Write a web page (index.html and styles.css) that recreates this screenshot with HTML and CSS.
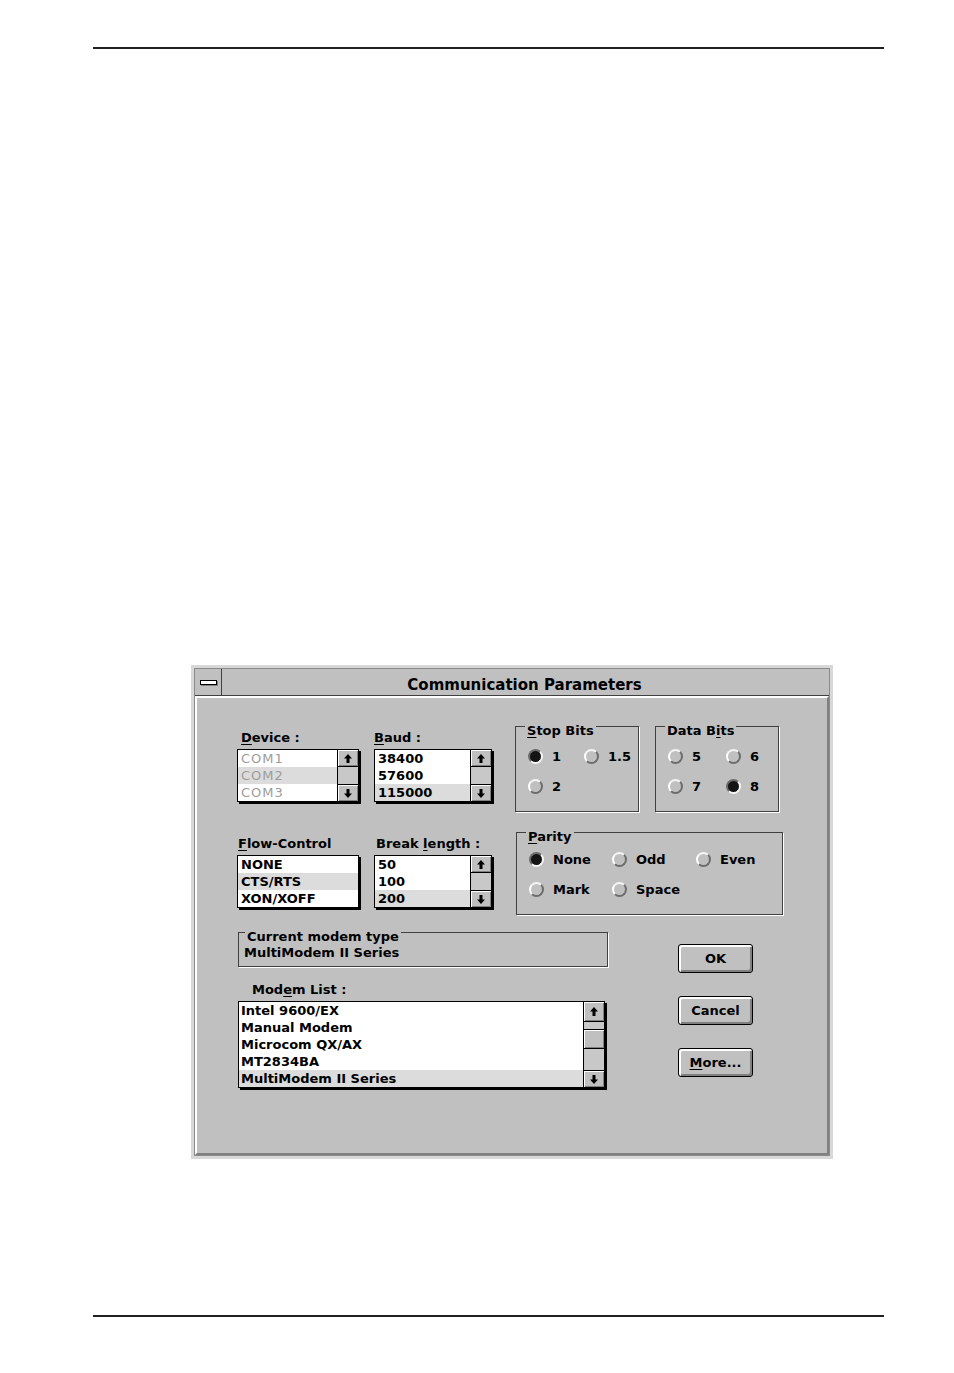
FILE: index.html
```html
<!DOCTYPE html>
<html>
<head>
<meta charset="utf-8">
<title>Communication Parameters</title>
<link rel="stylesheet" href="styles.css">
</head>
<body>
<div class="page">
  <div class="rule"></div>
  <div class="window">
    <div class="frame">
      <div class="titlebar">
        <div class="sysmenu"><span class="sysbar"></span></div>
        <div class="title">Communication Parameters</div>
      </div>
      <div class="client">
        <div class="row">
          <div class="field device">
            <div class="label pad4"><u>D</u>evice :</div>
            <div class="list small-list wide">
              <div class="items">
                <div class="item disabled">COM1</div>
                <div class="item disabled sel">COM2</div>
                <div class="item disabled">COM3</div>
              </div>
              <div class="sb">
                <div class="sb-btn sb-up"><svg width="8" height="9" viewBox="0 0 8 9"><path d="M4 0L8 4.5H5.5V9H2.5V4.5H0Z"/></svg></div>
                <div class="sb-track"></div>
                <div class="sb-btn sb-down"><svg width="8" height="9" viewBox="0 0 8 9"><path d="M4 9L8 4.5H5.5V0H2.5V4.5H0Z"/></svg></div>
              </div>
            </div>
          </div>
          <div class="field baud">
            <div class="label"><u>B</u>aud :</div>
            <div class="list small-list narrow">
              <div class="items">
                <div class="item">38400</div>
                <div class="item">57600</div>
                <div class="item sel">115000</div>
              </div>
              <div class="sb">
                <div class="sb-btn sb-up"><svg width="8" height="9" viewBox="0 0 8 9"><path d="M4 0L8 4.5H5.5V9H2.5V4.5H0Z"/></svg></div>
                <div class="sb-track"></div>
                <div class="sb-btn sb-down"><svg width="8" height="9" viewBox="0 0 8 9"><path d="M4 9L8 4.5H5.5V0H2.5V4.5H0Z"/></svg></div>
              </div>
            </div>
          </div>
          <div class="group stop">
            <div class="gtitle"><span><u>S</u>top Bits</span></div>
            <div class="opts">
              <div class="opt"><span class="radio on"></span>1</div>
              <div class="opt"><span class="radio"></span>1.5</div>
              <div class="opt"><span class="radio"></span>2</div>
            </div>
          </div>
          <div class="group data">
            <div class="gtitle"><span>Data B<u>i</u>ts</span></div>
            <div class="opts">
              <div class="opt"><span class="radio"></span>5</div>
              <div class="opt"><span class="radio"></span>6</div>
              <div class="opt"><span class="radio"></span>7</div>
              <div class="opt"><span class="radio on"></span>8</div>
            </div>
          </div>
        </div>

        <div class="row row2">
          <div class="field flow">
            <div class="label pad1"><u>F</u>low-Control</div>
            <div class="list small-list wide">
              <div class="items">
                <div class="item">NONE</div>
                <div class="item sel">CTS/RTS</div>
                <div class="item">XON/XOFF</div>
              </div>
            </div>
          </div>
          <div class="field baud">
            <div class="label pad2">Break <u>l</u>ength :</div>
            <div class="list small-list narrow">
              <div class="items">
                <div class="item">50</div>
                <div class="item">100</div>
                <div class="item sel">200</div>
              </div>
              <div class="sb">
                <div class="sb-btn sb-up"><svg width="8" height="9" viewBox="0 0 8 9"><path d="M4 0L8 4.5H5.5V9H2.5V4.5H0Z"/></svg></div>
                <div class="sb-track"></div>
                <div class="sb-btn sb-down"><svg width="8" height="9" viewBox="0 0 8 9"><path d="M4 9L8 4.5H5.5V0H2.5V4.5H0Z"/></svg></div>
              </div>
            </div>
          </div>
          <div class="group parity">
            <div class="gtitle"><span><u>P</u>arity</span></div>
            <div class="opts">
              <div class="opt"><span class="radio on"></span>None</div>
              <div class="opt"><span class="radio"></span>Odd</div>
              <div class="opt"><span class="radio"></span>Even</div>
              <div class="opt"><span class="radio"></span>Mark</div>
              <div class="opt"><span class="radio"></span>Space</div>
            </div>
          </div>
        </div>

        <div class="row row3">
          <div class="left">
            <div class="group current">
              <div class="gtitle"><span>Current modem type</span></div>
              <div class="value">MultiModem II Series</div>
            </div>
            <div class="label modem-label">Mod<u>e</u>m List :</div>
            <div class="list modem-list">
              <div class="items">
                <div class="item">Intel 9600/EX</div>
                <div class="item">Manual Modem</div>
                <div class="item">Microcom QX/AX</div>
                <div class="item">MT2834BA</div>
                <div class="item sel">MultiModem II Series</div>
              </div>
              <div class="sb">
                <div class="sb-btn sb-up tall"><svg width="8" height="9" viewBox="0 0 8 9"><path d="M4 0L8 4.5H5.5V9H2.5V4.5H0Z"/></svg></div>
                <div class="sb-track"><div class="thumb"></div></div>
                <div class="sb-btn sb-down"><svg width="8" height="9" viewBox="0 0 8 9"><path d="M4 9L8 4.5H5.5V0H2.5V4.5H0Z"/></svg></div>
              </div>
            </div>
          </div>
          <div class="buttons">
            <div class="btn">OK</div>
            <div class="btn">Cancel</div>
            <div class="btn"><span><u>M</u>ore...</span></div>
          </div>
        </div>
      </div>
    </div>
  </div>
  <div class="rule bottom"></div>
</div>
</body>
</html>
```

FILE: styles.css
```css
body {
  margin: 0;
  background: #fff;
  color: #000;
  font-family: "DejaVu Sans", "Liberation Sans", sans-serif;
  font-weight: bold;
  font-size: 13px;
}

.page {
  padding-top: 47px;
}

.rule {
  margin-left: 93px;
  width: 791px;
  height: 2px;
  background: #231f20;
}

.rule.bottom {
  margin-top: 156px;
}

u {
  text-decoration: underline;
  text-underline-offset: 2px;
  text-decoration-thickness: 1px;
}

/* window chrome */
.window {
  margin: 616px 0 0 191px;
  width: 642px;
  box-sizing: border-box;
  border: 3px solid #d8d8d8;
}

.frame {
  border: 1px solid #8a8a8a;
  background: #c0c0c0;
}

.titlebar {
  display: flex;
  height: 26px;
  border-bottom: 1px solid #404040;
}

.sysmenu {
  width: 26px;
  border-right: 1px solid #404040;
  display: flex;
  align-items: center;
  justify-content: center;
}

.sysbar {
  display: block;
  width: 17px;
  height: 5px;
  box-sizing: border-box;
  border: 1px solid #000;
  background: #fff;
  box-shadow: 1px 1px 0 #808080;
}

.title {
  flex: 1;
  text-align: center;
  font-size: 15px;
  padding: 7px 2px 0 0;
  line-height: 19px;
  white-space: nowrap;
}

.client {
  box-sizing: border-box;
  height: 459px;
  border-style: solid;
  border-width: 2px;
  border-color: #fff #808080 #808080 #fff;
  padding: 28px 0 0 40px;
}

/* rows */
.row {
  display: flex;
  align-items: flex-start;
}

.row2 {
  margin-top: 20px;
}

.row3 {
  margin-top: 17px;
}

.field {
  margin-top: 4px;
}

.field.baud {
  margin-left: 15px;
}

.label {
  height: 16px;
  line-height: 16px;
  margin-bottom: 3px;
  white-space: nowrap;
}

.pad4 { padding-left: 4px; }
.pad2 { padding-left: 2px; }
.pad1 { padding-left: 1px; }

/* list boxes */
.list {
  display: flex;
  box-sizing: border-box;
  border: 1px solid #000;
  box-shadow: 2px 2px 0 #000;
  background: #fff;
}

.list.wide { width: 122px; }
.list.narrow { width: 118px; }

.items {
  flex: 1;
  min-width: 0;
}

.item {
  height: 17px;
  line-height: 17px;
  padding-left: 3px;
  white-space: nowrap;
}

.item.sel {
  background: #dcdcdc;
}

.item.disabled {
  color: #9c9c9c;
  font-weight: normal;
  letter-spacing: 1px;
}

.sb {
  width: 20px;
  border-left: 1px solid #000;
  display: flex;
  flex-direction: column;
  background: #c8c8c8;
}

.sb-btn {
  height: 16px;
  background: #c0c0c0;
  box-shadow: inset 1px 1px 0 #fff, inset -1px -1px 0 #808080;
  display: flex;
  align-items: center;
  justify-content: center;
}

.sb-btn svg {
  display: block;
  fill: #000;
}

.sb-up { border-bottom: 1px solid #000; }
.sb-up.tall { height: 19px; }
.sb-down { border-top: 1px solid #000; }

.sb-track {
  flex: 1;
}

.thumb {
  margin-top: 7px;
  height: 18px;
  border-top: 1px solid #000;
  border-bottom: 1px solid #000;
  background: #c0c0c0;
  box-shadow: inset 1px 1px 0 #fff, inset -1px -1px 0 #808080;
}

/* group boxes */
.group {
  box-sizing: border-box;
  border: 1px solid #404040;
  box-shadow: 1px 1px 0 #fff;
}

.gtitle {
  margin: -4px 0 0 9px;
  height: 16px;
  line-height: 16px;
  white-space: nowrap;
}

.gtitle span {
  background: #c0c0c0;
  padding: 0 2px;
}

.stop {
  width: 124px;
  height: 86px;
  margin-left: 23px;
}

.data {
  width: 124px;
  height: 86px;
  margin-left: 16px;
}

.parity {
  width: 267px;
  height: 83px;
  margin-left: 24px;
}

.opts {
  display: grid;
  row-gap: 15px;
  padding-left: 12px;
}

.stop .opts {
  margin-top: 10px;
  grid-template-columns: 56px auto;
}

.data .opts {
  margin-top: 10px;
  grid-template-columns: 58px auto;
}

.parity .opts {
  margin-top: 7px;
  grid-template-columns: 83px 84px auto;
}

.opt {
  display: flex;
  align-items: center;
  gap: 9px;
  height: 15px;
  line-height: 15px;
  white-space: nowrap;
}

.radio {
  display: block;
  flex: none;
  width: 15px;
  height: 15px;
  box-sizing: border-box;
  border-radius: 50%;
  border: 2px solid;
  border-color: #f4f4f4 #6c6c6c #6c6c6c #fff;
  background: #c0c0c0;
}

.radio.on {
  border-color: #6c6c6c #f4f4f4 #f4f4f4 #6c6c6c;
  background: #141414;
}

/* bottom section */
.left {
  width: 370px;
  margin-left: 1px;
}

.current {
  width: 370px;
  height: 35px;
}

.current .gtitle {
  margin-left: 6px;
}

.value {
  padding-left: 5px;
  height: 16px;
  line-height: 16px;
  white-space: nowrap;
}

.modem-label {
  margin-top: 15px;
  padding-left: 14px;
}

.modem-list {
  width: 367px;
}

.modem-list .item {
  padding-left: 2px;
}

.buttons {
  margin: 12px 0 0 70px;
  display: flex;
  flex-direction: column;
  gap: 23px;
}

.btn {
  width: 75px;
  height: 29px;
  box-sizing: border-box;
  border: 1px solid #000;
  border-radius: 3px;
  background: #c0c0c0;
  box-shadow: inset 2px 2px 0 #fff, inset -2px -2px 0 #808080;
  display: flex;
  align-items: center;
  justify-content: center;
}
```
